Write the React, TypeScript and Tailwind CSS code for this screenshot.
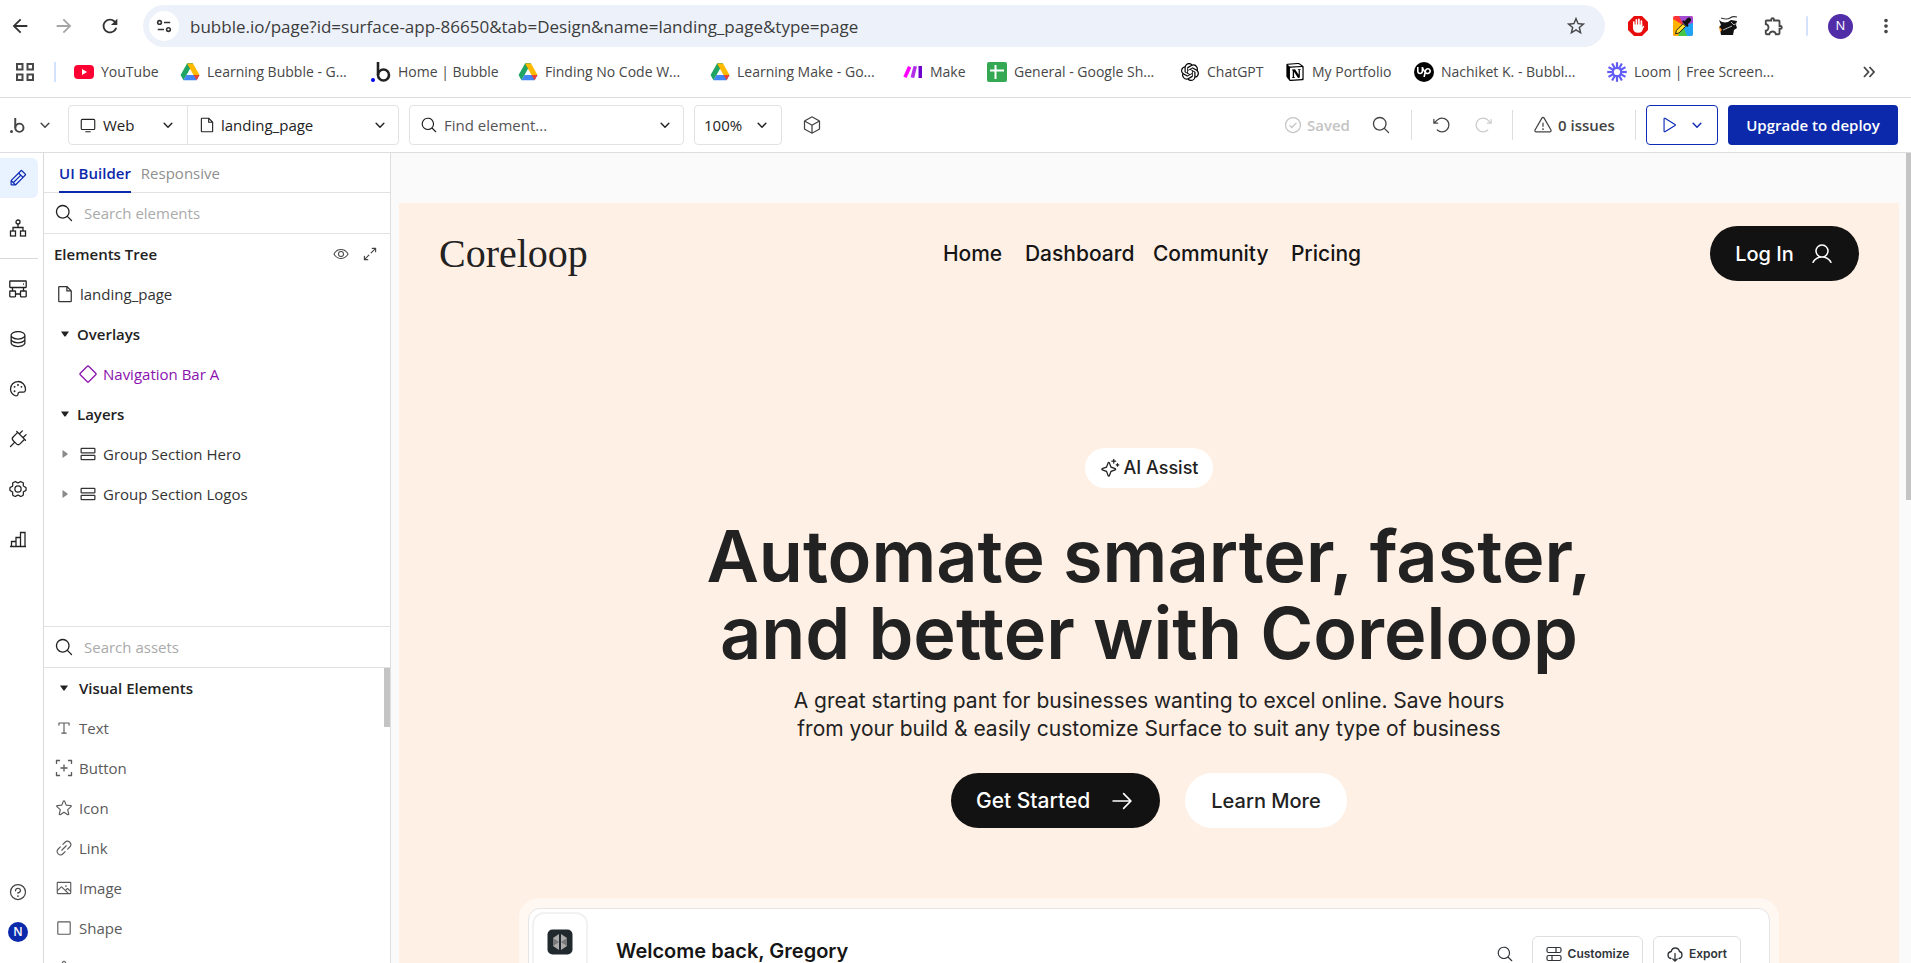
import type { ReactNode } from "react";
import { MdArrowBack, MdArrowForward, MdRefresh, MdStarBorder, MdOutlineExtension, MdMoreVert } from "react-icons/md";
import { SiOpenai, SiNotion, SiUpwork } from "react-icons/si";
import {
  PiMonitor, PiFile, PiMagnifyingGlass, PiCube, PiCheckCircle, PiArrowCounterClockwise, PiArrowClockwise,
  PiWarning, PiPlay, PiPencil, PiDatabase, PiPalette, PiPlug, PiGearSix, PiEye, PiArrowsOutSimple, PiDiamond,
  PiRows, PiStar, PiLinkSimple, PiImage, PiSquare, PiQuestion, PiSparkle, PiTextT, PiTriangle,
  PiUser, PiArrowRight,
} from "react-icons/pi";

function DriveIcon() {
  return (
    <svg viewBox="0 0 20 20" className="h-5 w-5 shrink-0">
      <path d="M7 1.5h6L6.5 13 3.4 18.2.6 13z" fill="#1fa463" />
      <path d="M7 1.5h6L9.9 6.8z" fill="#138442" />
      <path d="M7 1.5h6L19.5 13h-6z" fill="#ffba00" />
      <path d="M6.5 13h13l-2.9 5.2H3.4z" fill="#4285f4" />
      <path d="M13.5 13h6l-2.900 5.200z" fill="#ea4335" />
    </svg>
  );
}

function YouTubeIcon() {
  return (
    <svg viewBox="0 0 20 20" className="h-5 w-5 shrink-0">
      <rect y="3" width="20" height="14" rx="4" fill="#ff0033" />
      <path d="M8 7v6l5-3z" fill="#fff" />
    </svg>
  );
}

function BubbleIcon({ dot, className }: { dot: string; className: string }) {
  return (
    <svg viewBox="0 0 20 20" className={className}>
      <circle cx="2" cy="18" r="2" fill={dot} />
      <path d="M7 0v13" stroke="currentColor" strokeWidth="2.6" />
      <circle cx="12.5" cy="13" r="5.5" fill="none" stroke="currentColor" strokeWidth="2.6" />
    </svg>
  );
}

function MakeIcon() {
  return (
    <svg viewBox="0 0 20 20" className="h-5 w-5 shrink-0">
      <path d="M5 4l3.4 1.6L3.6 16 .4 14.6z" fill="#f0f" />
      <path d="M10.5 4l3.5.6L11.2 16l-3.6-.8z" fill="#b02de9" />
      <path d="M15.5 4H19v12h-3.5z" fill="#6d00cc" />
    </svg>
  );
}

function SheetsIcon() {
  return (
    <svg viewBox="0 0 20 20" className="h-5 w-5 shrink-0">
      <rect width="20" height="20" rx="2" fill="#34a853" />
      <path d="M8.5 3v14M3 8.5h14" stroke="#fff" strokeWidth="2" />
    </svg>
  );
}

function LoomIcon() {
  return (
    <svg viewBox="-10 -10 20 20" className="h-5 w-5 shrink-0" stroke="#625df5" strokeWidth="2.2" fill="none">
      <circle r="4.2" />
      {[0, 30, 60, 90, 120, 150, 180, 210, 240, 270, 300, 330].map((a) => (
        <path key={a} d="M0-4V-9.8" transform={`rotate(${a})`} />
      ))}
    </svg>
  );
}

const bookmarks: { label: string; icon: ReactNode; width: string }[] = [
  { label: "YouTube", icon: <YouTubeIcon />, width: "w-[106px]" },
  { label: "Learning Bubble - G...", icon: <DriveIcon />, width: "w-[191px]" },
  { label: "Home | Bubble", icon: <BubbleIcon dot="#0000ff" className="h-5 w-5 shrink-0 text-[#222]" />, width: "w-[147px]" },
  { label: "Finding No Code W...", icon: <DriveIcon />, width: "w-[192px]" },
  { label: "Learning Make - Go...", icon: <DriveIcon />, width: "w-[193px]" },
  { label: "Make", icon: <MakeIcon />, width: "w-[84px]" },
  { label: "General - Google Sh...", icon: <SheetsIcon />, width: "w-[193px]" },
  { label: "ChatGPT", icon: <SiOpenai className="h-[18px] w-5 shrink-0 text-black" />, width: "w-[105px]" },
  { label: "My Portfolio", icon: <SiNotion className="h-[18px] w-5 shrink-0 text-black" />, width: "w-[129px]" },
  {
    label: "Nachiket K. - Bubbl...",
    icon: <span className="flex h-5 w-5 shrink-0 items-center justify-center rounded-full bg-black"><SiUpwork className="h-3.5 w-3.5 text-white" /></span>,
    width: "w-[193px]",
  },
  { label: "Loom | Free Screen...", icon: <LoomIcon />, width: "w-[190px]" },
];

function BrowserChrome() {
  return (
    <header className="shrink-0 border-b border-[#dcdcdc] bg-white text-[#474747]">
      <div className="flex h-[52px] items-center pr-[18px] pl-[9px]">
        <button aria-label="Back" className="flex h-9 w-9 items-center"><MdArrowBack className="h-[22px] w-[22px] text-[#333]" /></button>
        <button aria-label="Forward" className="ml-2 flex h-9 w-9 items-center text-[#a5a5a5]"><MdArrowForward className="h-[22px] w-[22px]" /></button>
        <button aria-label="Reload" className="ml-2.5 flex h-9 w-9 items-center text-[#333]"><MdRefresh className="h-[22px] w-[22px]" /></button>
        <div className="ml-2 flex h-[42px] min-w-0 flex-1 items-center rounded-full bg-[#ecf1fa] pr-[18px] pl-1.5">
          <button aria-label="Site information" className="flex h-[30px] w-[30px] items-center justify-center rounded-full bg-white">
            <svg viewBox="0 0 18 18" className="h-4 w-4" fill="none" stroke="#333" strokeWidth="1.8">
              <circle cx="4" cy="5" r="2.1" /><path d="M9 5h7M2 13h7" /><circle cx="14" cy="13" r="2.1" />
            </svg>
          </button>
          <input
            aria-label="Address"
            className="ml-[11px] min-w-0 flex-1 bg-transparent pt-0.5 text-[17px] text-[#3c3c3c] outline-none"
            defaultValue="bubble.io/page?id=surface-app-86650&tab=Design&name=landing_page&type=page"
          />
          <button aria-label="Bookmark this page"><MdStarBorder className="h-[22px] w-[22px]" /></button>
        </div>
        <div className="ml-[23px] flex items-center gap-[25px]">
          <svg viewBox="0 0 20 20" className="h-5 w-5">
            <path d="M6 0h8l6 6v8l-6 6H6l-6-6V6z" fill="#e80d0d" />
            <path d="M5.800 10.500V6.200M8.400 9V3.800M10.900 9V3.300M13.400 9.500V5" stroke="#fff" strokeWidth="1.7" strokeLinecap="round" />
            <path d="M5 8.500h9.300v2.800l1-1.600 1 .6-2.500 5.200q-1 1.300-3.500 1.300-5.300 0-5.300-5z" fill="#fff" />
          </svg>
          <svg viewBox="0 0 20 20" className="h-5 w-5">
            <rect width="20" height="20" rx="2" fill="#f33" />
            <path d="M0 3v15q0 2 2 2h8V9z" fill="#ffb300" />
            <path d="M6 0h12q2 0 2 2v6l-9 2z" fill="#a44bd4" />
            <path d="M20 7v11q0 2-2 2h-5l-3-10z" fill="#20a4f3" />
            <path d="M10 10l4 10H5z" fill="#46c846" />
            <path d="M2.500 17.800l1-3.500 6.600-6.600 2.600 2.600L6 17z" fill="#ffe12b" stroke="#222" strokeWidth="1" />
            <path d="M9 5.500l1.500-1.200 1.200 1L14 2.500q2-1.800 3.500-.3t-.2 3.600l-2.600 2.400 1 1.200-1.500 1.600z" fill="#111" />
          </svg>
          <svg viewBox="0 0 20 20" className="h-5 w-5">
            <path d="M1 4q6 5 12 0l6 1-1 4 1 3-3 2-1 5H3L2 13l-1-2 2-2z" fill="#111" />
            <path d="M3 2q6 2 9 0t7-1" stroke="#333" fill="none" strokeWidth="1.2" />
            <path d="M1 10l3 4-2 2z" fill="#ff9a2e" />
            <path d="M13 6l3 3 3-2M5 14l9-4" stroke="#fff" strokeWidth=".7" fill="none" />
          </svg>
          <MdOutlineExtension className="h-[22px] w-[22px]" />
        </div>
        <span className="ml-[21px] h-5 w-0.5 rounded bg-[#d3e3fd]" />
        <button aria-label="Profile" className="ml-5 flex h-[25px] w-[25px] items-center justify-center rounded-full bg-[#512da8] text-[13px] text-white">N</button>
        <button aria-label="Browser menu" className="ml-[22px] -mr-1"><MdMoreVert className="h-[22px] w-[22px]" /></button>
      </div>
      <nav className="flex h-[45px] items-start pt-2 pr-9 pl-4 text-[14px] leading-6">
        <button aria-label="All apps" className="flex h-6 w-[38px] items-center">
          <svg viewBox="0 0 18 18" className="h-[18px] w-[18px]" fill="none" stroke="currentColor" strokeWidth="2">
            <path d="M1 1h5.500v5.500H1zM11.500 1H17v5.500h-5.500zM1 11.500h5.500V17H1zM11.500 11.500H17V17h-5.500z" />
          </svg>
        </button>
        <span className="mt-0.5 mr-[18px] h-5 w-0.5 bg-[#d3e3fd]" />
        {bookmarks.map((b) => (
          <a key={b.label} href="#" className={`flex h-6 shrink-0 items-center gap-[7px] whitespace-nowrap ${b.width}`}>
            {b.icon}
            <span>{b.label}</span>
          </a>
        ))}
        <button aria-label="More bookmarks" className="ml-auto flex h-6 items-center">
          <svg viewBox="0 0 12 12" className="h-3 w-3" fill="none" stroke="currentColor" strokeWidth="1.8"><path d="M1 1l4.500 5L1 11M6.500 1L11 6l-4.500 5" /></svg>
        </button>
      </nav>
    </header>
  );
}

function Caret() {
  return (
    <svg viewBox="0 0 14 14" className="pointer-events-none h-3 w-3 shrink-0" fill="none" stroke="currentColor" strokeWidth="1.700" strokeLinecap="round" strokeLinejoin="round">
      <path d="M2.500 5L7 9.500 11.500 5" />
    </svg>
  );
}

function EditorToolbar() {
  const select = "min-w-0 flex-1 appearance-none bg-transparent outline-none";
  return (
    <div className="flex h-[55px] shrink-0 items-center border-b border-[#dedede] bg-white pr-[13px] pl-2.5 text-[15px] text-[#222]">
      <button aria-label="Bubble menu" className="flex w-[58px] items-center gap-3.5 text-[#444]">
        <BubbleIcon dot="#444" className="h-[15px] w-[15px]" />
        <Caret />
      </button>
      <div className="flex h-10 w-[331px] rounded border border-[#e2e2e2]">
        <label className="flex w-[119px] items-center border-r border-[#e2e2e2] pr-[13px] pl-2.5">
          <PiMonitor className="mr-1.5 h-[18px] w-[18px] shrink-0" />
          <select aria-label="Platform" className={select}><option>Web</option></select>
          <Caret />
        </label>
        <label className="flex min-w-0 flex-1 items-center pr-3 pl-2.5">
          <PiFile className="mr-[5px] h-[18px] w-[18px] shrink-0" />
          <select aria-label="Page" className={select}><option>landing_page</option></select>
          <Caret />
        </label>
      </div>
      <label className="ml-2.5 flex h-10 w-[275px] items-center rounded border border-[#e2e2e2] pr-3 pl-2.5">
        <PiMagnifyingGlass className="mr-1.5 h-[18px] w-[18px] shrink-0" />
        <input aria-label="Find element" placeholder="Find element..." className="min-w-0 flex-1 bg-transparent outline-none placeholder:text-[#555]" />
        <Caret />
      </label>
      <label className="ml-2.5 flex h-10 w-[88px] items-center rounded border border-[#e2e2e2] pr-[13px] pl-[9px]">
        <select aria-label="Zoom" className={select}><option>100%</option></select>
        <Caret />
      </label>
      <button aria-label="Components" className="ml-5 text-[#444]"><PiCube className="h-5 w-5" /></button>

      <div className="ml-auto flex items-center text-[#444]">
        <span className="flex w-[88px] items-center gap-1 font-semibold text-[#c4c4c4]"><PiCheckCircle className="h-5 w-5" />Saved</span>
        <button aria-label="Search" className="flex w-10"><PiMagnifyingGlass className="h-5 w-5" /></button>
        <span className="h-[30px] w-px bg-[#dedede]" />
        <button aria-label="Undo" className="ml-5 flex w-[41px]"><PiArrowCounterClockwise className="h-5 w-5" /></button>
        <button aria-label="Redo" className="flex w-[39px] text-[#ccc]"><PiArrowClockwise className="h-5 w-5" /></button>
        <span className="h-[30px] w-px bg-[#dedede]" />
        <button className="ml-5 flex w-[102px] items-center gap-[5px] font-semibold whitespace-nowrap"><PiWarning className="h-5 w-5 shrink-0" />0 issues</button>
        <span className="h-[30px] w-px bg-[#dedede]" />
        <button aria-label="Preview" className="ml-2.5 flex h-10 w-[72px] items-center justify-between rounded border border-[#0d2bb5] pr-[14px] pl-3 text-[#0d2bb5]">
          <PiPlay className="h-[18px] w-[18px]" />
          <Caret />
        </button>
        <button className="ml-2.5 h-10 w-[170px] rounded bg-[#0c29ab] text-[15px] font-semibold text-white">Upgrade to deploy</button>
      </div>
    </div>
  );
}

function TreeNodesIcon() {
  return (
    <svg viewBox="0 0 18 18" className="h-[18px] w-[18px]" fill="none" stroke="currentColor" strokeWidth="1.3">
      <circle cx="9" cy="3" r="2" /><path d="M9 5v3.500M4 12V8.500h10V12" />
      <rect x="1.500" y="12" width="5" height="5" /><rect x="11.500" y="12" width="5" height="5" />
    </svg>
  );
}

function ServerNodesIcon() {
  return (
    <svg viewBox="0 0 18 18" className="h-[18px] w-[18px]" fill="none" stroke="currentColor" strokeWidth="1.3">
      <rect x=".8" y="1" width="16.400" height="6.500" rx=".5" /><path d="M14 4.200h1M3.500 7.500V11M14.500 7.500V11M6.500 14h5" />
      <rect x=".8" y="11" width="5.700" height="5.800" rx=".5" /><rect x="11.500" y="11" width="5.700" height="5.800" rx=".5" />
    </svg>
  );
}

function BarsIcon() {
  return (
    <svg viewBox="0 0 18 18" className="h-[18px] w-[18px]" fill="none" stroke="currentColor" strokeWidth="1.3">
      <path d="M1 16.500h16M2.500 16.500v-5H7M7 16.500v-9h4.500M11.500 16.500v-14H16v14" />
    </svg>
  );
}

function IconRail() {
  const items: [string, ReactNode][] = [
    ["Backend", <ServerNodesIcon />],
    ["Data", <PiDatabase className="h-5 w-5" />],
    ["Styles", <PiPalette className="h-5 w-5" />],
    ["Plugins", <PiPlug className="h-5 w-5" />],
    ["Settings", <PiGearSix className="h-5 w-5" />],
    ["Logs", <BarsIcon />],
  ];
  return (
    <nav className="flex w-11 shrink-0 flex-col border-r border-[#d9d9d9] bg-white pt-[5px] pb-[21px] text-[#222]">
      <button aria-label="Design" className="flex h-10 w-[38px] items-center rounded-r-md bg-[#e9f2ff] pl-2 text-[#0d2bb5]"><PiPencil className="h-5 w-5" /></button>
      <button aria-label="Workflow" className="mt-2.5 flex h-10 w-9 items-center justify-center"><TreeNodesIcon /></button>
      <span className="mt-2.5 mb-[5px] h-px w-[38px] bg-[#d9d9d9]" />
      {items.map(([name, icon]) => (
        <button key={name} aria-label={name} className="flex h-[50px] w-9 items-center justify-center">{icon}</button>
      ))}
      <button aria-label="Help" className="mt-auto mb-5 flex h-5 w-9 items-center justify-center text-[#444]"><PiQuestion className="h-5 w-5" /></button>
      <button aria-label="Account" className="ml-2 flex h-5 w-5 items-center justify-center rounded-full bg-[#0c29ab] text-xs font-semibold text-white">N</button>
    </nav>
  );
}

function Triangle({ open }: { open?: boolean }) {
  return (
    <svg viewBox="0 0 8 8" className="h-2 w-2 shrink-0">
      {open ? <path d="M0 1.500h8L4.500 6.500h-1z" fill="#222" /> : <path d="M1.500 0v8l5-3.500v-1z" fill="#8a8a8a" />}
    </svg>
  );
}

function PanelSearch({ label }: { label: string }) {
  return (
    <label className="flex h-[41px] shrink-0 items-center gap-2.5 border-b border-[#e2e2e2] pl-[10px]">
      <PiMagnifyingGlass className="h-5 w-5 text-[#222]" />
      <input aria-label={label} placeholder={label} className="min-w-0 flex-1 bg-transparent outline-none placeholder:text-[#aaa]" />
    </label>
  );
}

function SidePanel() {
  const row = "flex h-10 w-full items-center text-left";
  const assets: [string, ReactNode][] = [
    ["Text", <PiTextT className="h-[18px] w-[18px]" />],
    ["Button", (
      <svg viewBox="0 0 18 18" className="h-[18px] w-[18px]" fill="none" stroke="currentColor" strokeWidth="1.3">
        <path d="M1.500 5V1.500H5M13 1.500h3.500V5M16.500 13v3.500H13M5 16.500H1.500V13M9 5.500v7M5.500 9h7" />
      </svg>
    )],
    ["Icon", <PiStar className="h-[18px] w-[18px]" />],
    ["Link", <PiLinkSimple className="h-[18px] w-[18px]" />],
    ["Image", <PiImage className="h-[18px] w-[18px]" />],
    ["Shape", <PiSquare className="h-[18px] w-[18px]" />],
    ["Alert", <PiTriangle className="h-[18px] w-[18px]" />],
  ];
  return (
    <aside className="flex w-[347px] shrink-0 flex-col border-r border-[#dedede] bg-white text-[15px] text-[#333]">
      <div className="flex h-10 shrink-0 gap-2.5 border-b border-[#e2e2e2] pl-[15px]">
        <button className="-mb-px border-b-2 border-[#0c29ab] pt-0.5 font-semibold text-[#0c29ab]">UI Builder</button>
        <button className="pt-0.5 text-[#8f8f8f]">Responsive</button>
      </div>
      <PanelSearch label="Search elements" />
      <section className="min-h-0 flex-1 overflow-hidden">
        <div className={`${row} justify-between pr-[11px] pl-2.5`}>
          <h2 className="font-semibold text-[#222]">Elements Tree</h2>
          <span className="flex items-center gap-3 text-[#444]">
            <button aria-label="Toggle visibility"><PiEye className="h-4 w-4" /></button>
            <button aria-label="Expand"><PiArrowsOutSimple className="h-[18px] w-[18px]" /></button>
          </span>
        </div>
        <button className={`${row} gap-[5px] pl-[11px]`}><PiFile className="h-5 w-5" />landing_page</button>
        <button className={`${row} gap-2 pl-[17px] font-semibold text-[#222]`}><Triangle open />Overlays</button>
        <button className={`${row} gap-[5px] pl-[34px] text-[#8a12ad]`}><PiDiamond className="h-5 w-5" />Navigation Bar A</button>
        <button className={`${row} gap-2 pl-[17px] font-semibold text-[#222]`}><Triangle open />Layers</button>
        {["Group Section Hero", "Group Section Logos"].map((name) => (
          <button key={name} className={`${row} pl-[17px]`}>
            <Triangle /><PiRows className="mr-[5px] ml-[9px] h-5 w-5" />{name}
          </button>
        ))}
      </section>
      <section className="flex h-[337px] shrink-0 flex-col border-t border-[#e2e2e2]">
        <PanelSearch label="Search assets" />
        <div className="flex min-h-0 flex-1 overflow-hidden">
          <div className="min-w-0 flex-1">
            <button className={`${row} gap-[11px] pl-4 font-semibold text-[#222]`}><Triangle open />Visual Elements</button>
            {assets.map(([name, icon]) => (
              <button key={name} className={`${row} gap-1.5 pl-[11px] text-[#5a5a5a]`}>{icon}{name}</button>
            ))}
          </div>
          <span className="h-[59px] w-1.5 bg-[#c4c4c4]" />
        </div>
      </section>
    </aside>
  );
}

function DashboardPreview() {
  return (
    <div className="mx-auto mt-[70px] w-[84%] shrink-0 rounded-t-[20px] bg-[#fff7f1] px-[9px] pt-2.5">
      <div className="flex h-[120px] items-start rounded-t-xl border border-[#e5e5e8] bg-white pr-7">
        <div className="mt-[3px] ml-[3px] flex h-[110px] w-14 justify-center rounded-xl border-2 border-[#f2f2f3] pt-[15px]">
          <svg viewBox="0 0 26 26" className="h-[26px] w-[26px]">
            <rect x=".5" y=".5" width="25" height="25" rx="5" fill="#20292e" />
            <path d="M12 5v16l-6-4V9z" fill="#aaa" /><path d="M14 5v16l6-4V9z" fill="#aaa" />
            <path d="M12 13L6 9v8zM14 13l6-4v8z" fill="#777" />
          </svg>
        </div>
        <h3 className="mt-7 ml-7 text-xl leading-7 font-semibold text-[#151515]">Welcome back, Gregory</h3>
        <div className="mt-[27px] ml-auto flex text-xs font-semibold text-[#2f3439]">
          <button aria-label="Search preview" className="mr-[18px] flex h-9 items-center"><PiMagnifyingGlass className="h-[18px] w-[18px]" /></button>
          <button className="mr-2.5 flex h-9 w-[111px] items-center justify-center gap-1.5 rounded-md border border-[#dedee2]">
            <svg viewBox="0 0 16 16" className="h-4 w-4" fill="none" stroke="currentColor" strokeWidth="1.200">
              <rect x="1" y="1.500" width="14" height="5" rx="1.500" /><rect x="1" y="9.500" width="14" height="5" rx="1.500" /><path d="M10 1.500v5M6 9.500v5" />
            </svg>
            Customize
          </button>
          <button className="flex h-9 w-[88px] items-center justify-center gap-1.5 rounded-md border border-[#dedee2]">
            <svg viewBox="0 0 16 16" className="h-4 w-4" fill="none" stroke="currentColor" strokeWidth="1.300" strokeLinecap="round">
              <path d="M4 12.500Q1 12 1 9t3.200-3.500Q5 2 8.300 2T12.500 5.500Q15 6 15 9t-3 3.500M8 7.500V15M5.800 13L8 15l2.200-2" />
            </svg>
            Export
          </button>
        </div>
      </div>
    </div>
  );
}

function LandingPage() {
  return (
    <div className="flex min-h-0 flex-1 flex-col overflow-hidden bg-[#fff0e5] font-['Inter',sans-serif] text-[#222]">
      <header className="mx-10 mt-[23px] flex h-[55px] shrink-0 items-center justify-between">
        <a href="#" className="w-[149px] font-['Liberation_Serif',serif] text-[40px] leading-none font-medium">Coreloop</a>
        <nav className="ml-1.5 flex text-[21px] font-medium text-[#151515]">
          <a href="#" className="w-[82px]">Home</a>
          <a href="#" className="w-32">Dashboard</a>
          <a href="#" className="w-[138px]">Community</a>
          <a href="#">Pricing</a>
        </nav>
        <button className="flex h-[55px] w-[149px] items-center justify-center gap-4 rounded-full bg-[#121212] text-xl font-medium text-white">
          Log In<PiUser className="h-6 w-6" />
        </button>
      </header>
      <main className="mt-[167px] flex flex-col items-center">
        <span className="flex h-10 w-32 items-center justify-center gap-1 rounded-full bg-white text-lg font-medium"><PiSparkle className="h-5 w-5 shrink-0" />AI Assist</span>
        <h1 className="mt-[29px] text-center text-[72px] leading-[77px] font-semibold">Automate smarter, faster,<br />and better with Coreloop</h1>
        <p className="mt-4 text-center text-[21px] leading-7">A great starting pant for businesses wanting to excel online. Save hours<br />from your build &amp; easily customize Surface to suit any type of business</p>
        <div className="mt-[30px] flex gap-[25px]">
          <button className="flex h-[55px] w-[209px] items-center justify-between rounded-full bg-[#121212] px-[25px] text-[21px] font-medium text-white">Get Started<PiArrowRight className="h-[26px] w-[26px]" /></button>
          <button className="h-[55px] w-[162px] rounded-full bg-white text-xl font-medium">Learn More</button>
        </div>
      </main>
      <DashboardPreview />
    </div>
  );
}

export default function App() {
  return (
    <div className="flex h-screen flex-col overflow-hidden font-['Open_Sans','Noto_Sans',sans-serif]">
      <BrowserChrome />
      <EditorToolbar />
      <div className="flex min-h-0 flex-1">
        <IconRail />
        <SidePanel />
        <div className="flex min-w-0 flex-1 bg-[#fafafa]">
          <div className="flex min-w-0 flex-1 flex-col pt-[50px] pr-[7px] pl-2"><LandingPage /></div>
          <span className="h-[347px] w-[5px] bg-[#c4c4c4]" />
        </div>
      </div>
    </div>
  );
}
